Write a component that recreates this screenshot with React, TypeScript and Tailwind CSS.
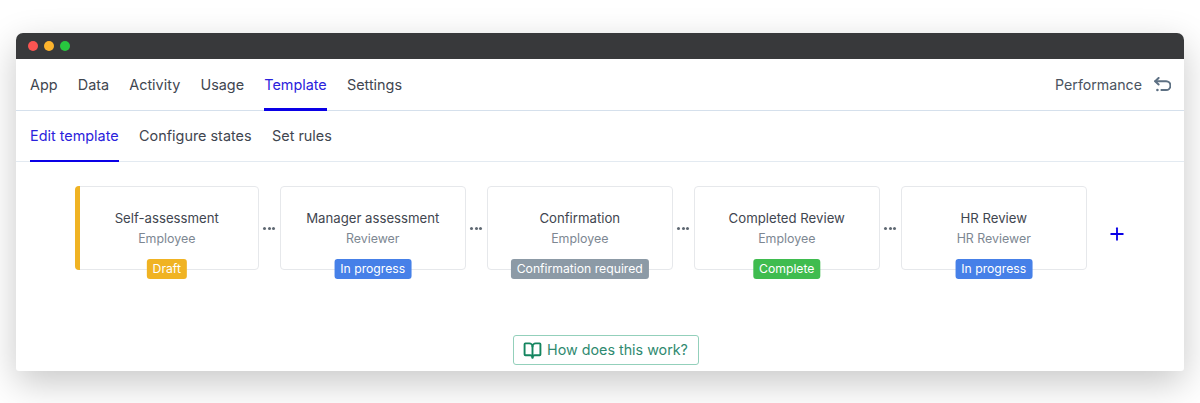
import React from 'react';
import { BookOpen, Plus } from 'lucide-react';

const navTabs = ['App', 'Data', 'Activity', 'Usage', 'Template', 'Settings'];
const subTabs = ['Edit template', 'Configure states', 'Set rules'];

const stages = [
  { title: 'Self-assessment', role: 'Employee', badge: 'Draft', color: 'bg-[#f0b323]', accent: true },
  { title: 'Manager assessment', role: 'Reviewer', badge: 'In progress', color: 'bg-[#4680e8]' },
  { title: 'Confirmation', role: 'Employee', badge: 'Confirmation required', color: 'bg-[#8c9aa6]' },
  { title: 'Completed Review', role: 'Employee', badge: 'Complete', color: 'bg-[#3fbc4f]' },
  { title: 'HR Review', role: 'HR Reviewer', badge: 'In progress', color: 'bg-[#4680e8]' },
];

function Dots() {
  return (
    <div className="flex w-[21.5px] justify-center gap-[1.5px]">
      <span className="h-[3px] w-[3px] rounded-full bg-[#5f6872]" />
      <span className="h-[3px] w-[3px] rounded-full bg-[#5f6872]" />
      <span className="h-[3px] w-[3px] rounded-full bg-[#5f6872]" />
    </div>
  );
}

function ReturnIcon() {
  return (
    <svg className="h-[15px] w-[17px] text-[#5d7083]" viewBox="0 0 17 15" fill="none" stroke="currentColor" strokeWidth="2" strokeLinecap="round" strokeLinejoin="round">
      <path d="M4.6 1 1.2 4.3l3.4 3.2" />
      <path d="M1.2 4.3h10.9a3.9 3.9 0 0 1 0 8.7H7.4" />
      <circle cx="3.4" cy="13" r="1.3" fill="currentColor" stroke="none" />
    </svg>
  );
}

function StageCard({ title, role, badge, color, accent }: (typeof stages)[number]) {
  return (
    <div className={`relative flex h-[84px] flex-col items-center rounded-[4px] border border-[#e6e8eb] bg-white pt-[21px] ${accent ? 'w-[183.5px]' : 'w-[185.5px]'}`}>
      {accent && <span className="absolute top-[-1px] bottom-[-1px] left-[-1px] w-[5px] rounded-l-[4px] bg-[#f0b323]" />}
      <div className="text-[13.2px] leading-5 text-[#3f4650]">{title}</div>
      <div className="mt-[0.5px] text-[12.4px] leading-5 text-[#7d8792]">{role}</div>
      <span className={`absolute bottom-[-10px] left-1/2 -translate-x-1/2 rounded-[3px] px-[6px] text-[12.2px] leading-5 whitespace-nowrap text-white ${color}`}>
        {badge}
      </span>
    </div>
  );
}

export default function App() {
  return (
    <div className="h-[403px] w-[1200px] overflow-hidden bg-white px-4 pt-[33px] font-['Inter',sans-serif]">
      <div className="h-[338px] overflow-hidden rounded-t-[7px] rounded-b-[3px] bg-white shadow-[0_12px_36px_rgba(0,0,0,0.22)]">
        {/* Window bar */}
        <div className="flex h-[26px] items-center gap-[6.4px] bg-[#38393b] pl-[11.5px]">
          <span className="h-[10px] w-[10px] rounded-full bg-[#fb5552]" />
          <span className="h-[10px] w-[10px] rounded-full bg-[#fdb42d]" />
          <span className="h-[10px] w-[10px] rounded-full bg-[#28c73f]" />
        </div>

        {/* Main nav */}
        <div className="flex h-[52px] items-stretch justify-between border-b border-[#d5e0ec] pr-[13px] pl-[14px]">
          <div className="flex gap-[20.2px]">
            {navTabs.map(tab => (
              <div
                key={tab}
                className={`-mb-px flex items-center border-b-[3px] pt-[3px] text-[14.4px] ${tab === 'Template' ? 'border-[#0a00e6] text-[#2a22dc]' : 'border-transparent text-[#3f4650]'}`}
              >
                {tab}
              </div>
            ))}
          </div>
          <div className="flex items-center gap-[12px] text-[14.2px] text-[#4a5360]">
            Performance
            <ReturnIcon />
          </div>
        </div>

        {/* Sub nav */}
        <div className="flex h-[51px] items-stretch gap-[20.5px] border-b border-[#e3eaf1] pl-[14px]">
          {subTabs.map(tab => (
            <div
              key={tab}
              className={`-mb-px flex items-center border-b-2 pt-[1px] text-[14.4px] ${tab === 'Edit template' ? 'border-[#0a00e6] text-[#2a22dc]' : 'border-transparent text-[#3f4650]'}`}
            >
              {tab}
            </div>
          ))}
        </div>

        {/* Stages */}
        <div className="flex items-center pt-6 pl-[59px]">
          {stages.map((stage, index) => (
            <React.Fragment key={stage.title}>
              <StageCard {...stage} />
              {index !== stages.length - 1 && <Dots />}
            </React.Fragment>
          ))}
          <Plus className="mt-[12px] ml-[20px] h-[20px] w-[20px] text-[#0a00e6]" strokeWidth={2.2} />
        </div>

        <div className="flex justify-center pt-[65px] pl-[11px]">
          <div className="flex h-[30px] w-[186px] items-center justify-center gap-[5px] rounded-[3px] border border-[#93d0bb] text-[14.3px] text-[#2f8a70]">
            <BookOpen className="h-[19px] w-[19px] text-[#14855f]" strokeWidth={2.4} />
            How does this work?
          </div>
        </div>
      </div>
    </div>
  );
}
